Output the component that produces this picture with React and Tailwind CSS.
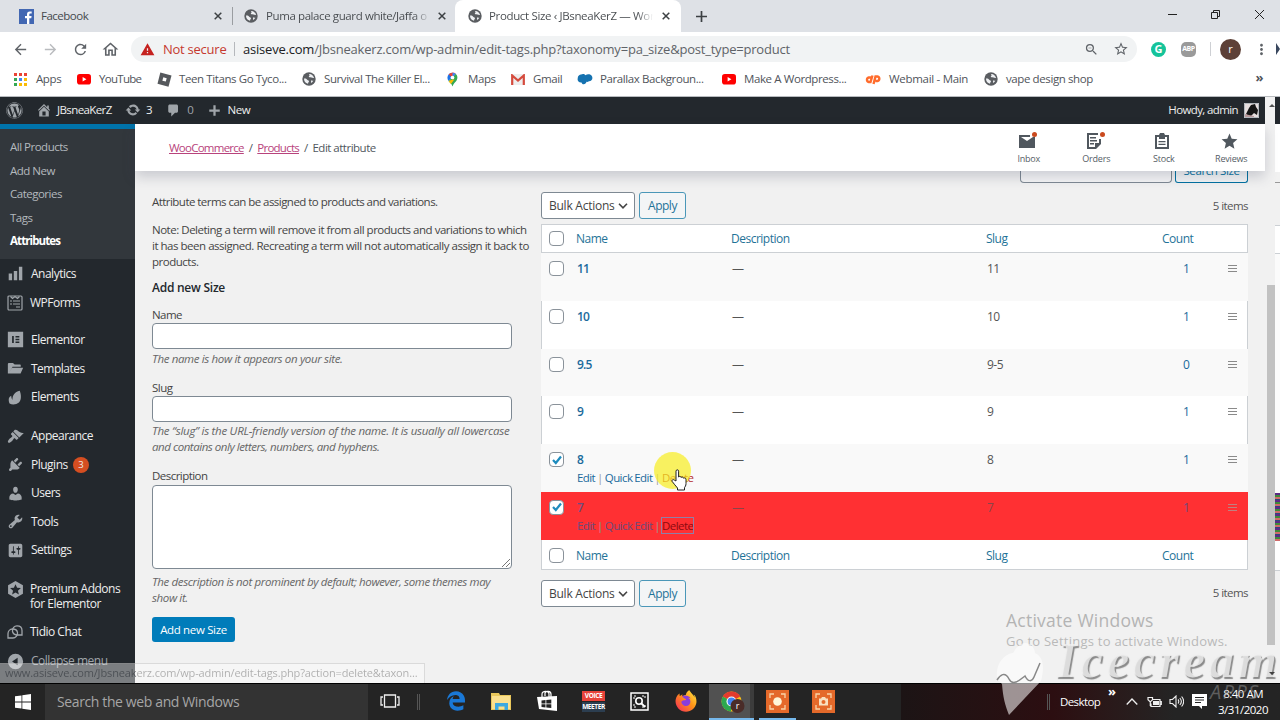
import { FaWordpress, FaEdgeLegacy, FaFirefoxBrowser } from "react-icons/fa";
import {
  MdArrowBack,
  MdArrowForward,
  MdRefresh,
  MdOutlineHome,
  MdWarning,
  MdStarBorder,
  MdZoomOut,
  MdMoreVert,
  MdStar,
} from "react-icons/md";

const dash = {
  home: "M16 8.5l1.53 1.53-1.06 1.06L10 4.6l-6.47 6.49-1.06-1.06L10 2.5l4 4v-2h2v4zm-6-2.46l6 5.99V18H4v-5.97zM12 17v-5H8v5h4z",
  update:
    "M10.2 3.28c3.53 0 6.43 2.61 6.92 6h2.08l-3.5 4-3.5-4h2.32c-.45-1.97-2.21-3.45-4.32-3.45-1.45 0-2.73.71-3.54 1.78L4.95 5.66C6.23 4.2 8.11 3.28 10.2 3.28zm-.4 13.44c-3.52 0-6.43-2.61-6.92-6H.8l3.5-4c1.17 1.33 2.33 2.67 3.5 4H5.48c.45 1.97 2.21 3.45 4.32 3.45 1.45 0 2.73-.71 3.54-1.78l1.71 1.95c-1.28 1.46-3.15 2.38-5.25 2.38z",
  comment:
    "M5 2h9c1.1 0 2 .9 2 2v7c0 1.1-.9 2-2 2h-2l-5 5v-5H5c-1.1 0-2-.9-2-2V4c0-1.1.9-2 2-2z",
  plus: "M17 8.5v3h-5.5V17h-3v-5.5H3v-3h5.500V3h3v5.500z",
  chart: "M18 18V2h-4v16h4zm-6 0V7H8v11h4zm-6 0v-8H2v8h4z",
  elementor: "M1 1h18v18H1zM6 6v8h2V6zm4 0v1.600h4.500V6zm0 3.200v1.600h4.500V9.200zm0 3.200V14h4.500v-1.600z",
  folder: "M1 16V5c0-1 .6-1.600 1.500-1.600H7l2 2h6c.8 0 1.200.5 1.200 1.200V8H6.500L3 14l2.700-4.800H19L16 16z",
  leaf: "M3 17c-2-5-.5-8 2-9 0 3 1 4 1.500 5C6 8 9 3 15 2c2 5 2 11-1 14-3 2.500-8 3-11 1z",
  brush:
    "M14.48 11.06L7.41 3.99l1.5-1.5c.5-.56 2.3-.47 3.51.32 1.21.8 1.43 1.28 2.91 2.1 1.18.64 2.45 1.26 4.45.85zm-.71.71L6.7 4.7 4.93 6.47c-.39.39-.39 1.02 0 1.41l1.06 1.06c.39.39.39 1.03 0 1.42-.6.6-1.43 1.11-2.21 1.69-.35.26-.7.53-1.01.84C1.43 14.23.4 16.08 1.4 17.07c.99 1 2.84-.03 4.18-1.36.31-.31.58-.66.85-1.02.57-.78 1.08-1.61 1.69-2.21.39-.39 1.02-.39 1.41 0l1.06 1.06c.39.39 1.02.39 1.41 0z",
  plug: "M13.11 4.36L9.87 7.6 8 5.73l3.24-3.24c.35-.34 1.05-.2 1.56.32.52.51.66 1.21.31 1.55zm-8 1.77l.91-1.12 9.01 9.01-1.19.84c-.71.71-2.63 1.16-3.82 1.16H6.14L4.9 17.26c-.59.59-1.54.59-2.12 0-.59-.58-.59-1.53 0-2.12l1.24-1.24v-3.88c0-1.13.4-3.19 1.09-3.89zm7.26 3.97l3.24-3.24c.34-.35 1.04-.21 1.55.31.52.51.66 1.21.31 1.55l-3.24 3.25z",
  user: "M10 9.25c-2.27 0-2.73-3.44-2.73-3.44C7 4.02 7.82 2 9.97 2c2.16 0 2.98 2.02 2.71 3.81 0 0-.41 3.44-2.68 3.44zm0 2.57L12.72 10c2.39 0 4.52 2.33 4.52 4.53v2.49s-3.65 1.13-7.24 1.13c-3.65 0-7.24-1.13-7.24-1.13v-2.49c0-2.25 1.94-4.48 4.47-4.48z",
  wrench:
    "M16.68 9.77c-1.34 1.34-3.3 1.67-4.95.99l-5.41 6.52c-.99.99-2.59.99-3.58 0s-.99-2.59 0-3.57l6.52-5.42c-.68-1.65-.35-3.61.99-4.95 1.28-1.28 3.12-1.62 4.72-1.06l-2.89 2.89 2.82 2.82 2.86-2.87c.53 1.58.18 3.39-1.08 4.65zM3.81 16.21c.4.39 1.04.39 1.43 0 .4-.4.4-1.04 0-1.43-.39-.4-1.03-.4-1.43 0-.39.39-.39 1.03 0 1.43z",
  settings:
    "M18 16V4c0-1.1-.9-2-2-2H4c-1.1 0-2 .9-2 2v12c0 1.1.9 2 2 2h12c1.1 0 2-.9 2-2zM8 11h1c.55 0 1 .45 1 1s-.45 1-1 1H8v1.5c0 .28-.22.5-.5.5s-.5-.22-.5-.5V13H6c-.55 0-1-.45-1-1s.45-1 1-1h1V5.5c0-.28.22-.5.5-.5s.5.22.5.5V11zm5-2h-1c-.55 0-1-.45-1-1s.45-1 1-1h1V5.5c0-.28.22-.5.5-.5s.5.22.5.5V7h1c.55 0 1 .45 1 1s-.45 1-1 1h-1v5.5c0 .28-.22.5-.5.5s-.5-.22-.5-.5V9z",
  collapse: "M10 1a9 9 0 1 0 0 18 9 9 0 0 0 0-18zm2.500 4.500v9L6 10z",
};

const Dash = ({ name, className = "size-[17px] text-[#a0a5aa]" }) => (
  <svg viewBox="0 0 20 20" fill="currentColor" fillRule="evenodd" className={`shrink-0 ${className}`}>
    <path d={dash[name]} />
  </svg>
);

const WpFormsIcon = () => (
  <svg viewBox="0 0 16 16" className="size-4 shrink-0" fill="none" stroke="#a0a5aa" strokeWidth="1.200">
    <rect x="1" y="1" width="14" height="14" rx="1" />
    <path d="M3.500 1.500l2 2 2.500-2 2.500 2 2-2M3 6h2M6 6h7M3 9h2M6 9h7M9 12h4" />
  </svg>
);

const PremiumIcon = () => (
  <svg viewBox="0 0 16 16" className="size-[17px] shrink-0">
    <path d="M8 0l7 4v8l-7 4-7-4V4z" fill="#a0a5aa" />
    <path d="M8 3l1.500 3.400 3.600.3-2.800 2.400.9 3.600L8 10.800l-3.200 1.900.9-3.600-2.800-2.400 3.600-.3z" fill="#23282d" />
  </svg>
);

const TidioIcon = () => (
  <svg viewBox="0 0 16 16" className="size-4 shrink-0" fill="none" stroke="#a0a5aa" strokeWidth="1.300">
    <path d="M5.500 7.500C5 4 7.500 1.800 10 1.800c3 0 5 2 5 4.700V11h-4.500C8 11 6 9.500 5.500 7.500z" />
    <path d="M10.500 8.500c.4 3-2 5.500-4.500 5.500H1V9.800C1 7 3 5 5.500 5c2.500 0 4.700 1.300 5 3.500z" />
  </svg>
);

const Globe = () => (
  <svg viewBox="0 0 14 14" className="size-[14px] shrink-0">
    <circle cx="7" cy="7" r="6.700" fill="#5a5d61" />
    <path d="M2 6.500c1.500-.3 2.500.3 3.200 1.200.8.800 1.800.6 1.800 1.600 0 .8-.8 1-1 2.500C3.500 11.300 1.800 9 2 6.500zM7.300 1.900c2.500 0 4.300 1.800 4.700 3.900-.8.600-1.500.2-2.300-.2-.8-.5-2-.2-2.700-.7-.6-.6.2-1.200.8-1.500-.6-.4-.9-.8-.5-1.500zM9 8.500c.8-.3 1.800 0 2.300.3-.5 1-1.200 1.800-2.200 2.300z" fill="#eef0f3" />
  </svg>
);

const YouTube = () => (
  <svg viewBox="0 0 14 12" className="h-3 w-[14px] shrink-0">
    <rect y="1" width="14" height="10.500" rx="2.800" fill="#f00" />
    <path d="M5.600 4l3.800 2.200-3.800 2.200z" fill="#fff" />
  </svg>
);

const appColors = ["#ea4335", "#ea4335", "#ea4335", "#34a853", "#4285f4", "#fbbc05", "#34a853", "#fbbc05", "#fbbc05"];
const AppsGrid = () => (
  <svg viewBox="0 0 13 13" className="size-[13px] shrink-0">
    {appColors.map((c, i) => (
      <rect key={i} x={(i % 3) * 5} y={Math.floor(i / 3) * 5} width="3" height="3" fill={c} />
    ))}
  </svg>
);

const Roblox = () => (
  <svg viewBox="0 0 15 15" className="size-[15px] shrink-0">
    <path d="M3.300.5l11.200 3-3 11.200-11-3z" fill="#55585c" />
    <path d="M6.300 5.300l3.400.9-.9 3.400-3.400-.9z" fill="#fff" />
  </svg>
);

const MapPin = () => (
  <svg viewBox="0 0 12 16" className="h-[15px] w-[11px] shrink-0">
    <path d="M6 .5A5.500 5.500 0 0 0 .5 6c0 1.500.5 2.500 1.200 3.500L6 5z" fill="#1a73e8" />
    <path d="M1.800 2.500L6 6 9.500 1.700A5.500 5.500 0 0 0 1.800 2.500z" fill="#ea4335" />
    <path d="M9.500 1.700L1.700 9.700C3 11.500 5 12.500 6 15.500c.8-3 2.800-4 4.300-6.200C12 6.500 11.700 3.700 9.500 1.700z" fill="#34a853" />
    <path d="M6 8L1.700 9.700c.8 1.200 1.800 2 2.600 3.200L8 8z" fill="#fbbc04" />
    <path d="M6 .5c1.300 0 2.600.4 3.500 1.200L6 6z" fill="#4285f4" />
    <circle cx="6" cy="5.800" r="2" fill="#fff" />
  </svg>
);

const GmailIcon = () => (
  <svg viewBox="0 0 14 11" className="h-[11px] w-[14px] shrink-0">
    <rect width="14" height="11" rx="1" fill="#eee" />
    <path d="M1.200 11V1.500L7 6.500l5.800-5V11" fill="none" stroke="#d54b3d" strokeWidth="2.200" />
  </svg>
);

const CloudIcon = () => (
  <svg viewBox="0 0 16 12" className="h-3 w-4 shrink-0" fill="#1572b0">
    <path d="M4 1.500C6 .5 7.500 1 8.500 2.300 10 .8 13 .8 14.500 2.500 16.500 5 15 8 12 8.200 11 9 10 9 9.500 8.800 9 11.500 5.500 12.500 4.500 9.500 1.500 9.800 0 7.500.8 5 .5 3.500 2.500 1.500 4 1.500z" />
  </svg>
);

const CpanelIcon = () => (
  <svg viewBox="0 0 16 12" className="h-3 w-4 shrink-0" fill="none" stroke="#ff6c2c" strokeWidth="2.400">
    <path d="M6 4.500H3.800a2.300 2.300 0 0 0 0 4.500H5.500L7.500 2.500M8.500 11l2-7.500h2a2.300 2.300 0 0 1 0 4.500H10.500" />
  </svg>
);

const bookmarks = [
  { label: "Apps", icon: <AppsGrid />, cls: "ml-[14px] w-[63px] gap-[9px]" },
  { label: "YouTube", icon: <YouTube />, cls: "w-[80px] gap-2 tracking-[-0.7px]" },
  { label: "Teen Titans Go Tyco...", icon: <Roblox />, cls: "w-[145px] gap-[7px]" },
  { label: "Survival The Killer El...", icon: <Globe />, cls: "w-[145px] gap-2" },
  { label: "Maps", icon: <MapPin />, cls: "w-[64px] gap-[10px]" },
  { label: "Gmail", icon: <GmailIcon />, cls: "w-[66px] gap-2" },
  { label: "Parallax Backgroun...", icon: <CloudIcon />, cls: "w-[145px] gap-[7px]" },
  { label: "Make A Wordpress...", icon: <YouTube />, cls: "w-[143px] gap-2" },
  { label: "Webmail - Main", icon: <CpanelIcon />, cls: "w-[119px] gap-[8px] tracking-[-0.3px]" },
  { label: "vape design shop", icon: <Globe />, cls: "gap-2" },
];

const Close = ({ className = "" }) => (
  <svg viewBox="0 0 8 8" className={`size-2 shrink-0 ${className}`} stroke="#3c4043" strokeWidth="1.500">
    <path d="M.7.7l6.600 6.600M7.300.7L.7 7.300" />
  </svg>
);

function TabStrip() {
  return (
    <div className="flex h-8 items-center bg-[#dee1e6] text-[11.500px] tracking-[-0.35px] text-[#45494d]">
      <div className="flex w-[232px] items-center pl-[19px]">
        <svg viewBox="0 0 15 15" className="size-[15px] shrink-0">
          <rect width="15" height="15" fill="#4267b2" />
          <path d="M10.300 15V9.300h2l.3-2.200h-2.300V5.700c0-.7.3-1.100 1.100-1.100h1.300V2.500h-1.800C8.800 2.500 8 3.700 8 5.400v1.700H6v2.200h2V15z" fill="#fff" />
        </svg>
        <span className="ml-[7px] flex-1 tracking-[-0.5px]">Facebook</span>
        <Close className="mr-[10px]" />
      </div>
      <div className="flex h-[18px] w-[223px] items-center border-l border-[#9a9da1] pl-[11px]">
        <Globe />
        <span className="ml-2 w-[164px] overflow-hidden bg-linear-to-r from-[#45494d] from-90% to-[#dee1e6] bg-clip-text tracking-[-0.4px] whitespace-nowrap text-transparent">
          Puma palace guard white/Jaffa o
        </span>
        <Close className="ml-[8px]" />
      </div>
      <div className="flex h-full w-[226px] items-center rounded-t-lg bg-white pl-[13px]">
        <Globe />
        <span className="ml-[7px] w-[164px] overflow-hidden bg-linear-to-r from-[#45494d] from-90% to-white bg-clip-text whitespace-nowrap text-transparent">
          Product Size ‹ JBsneaKerZ — Wor
        </span>
        <Close className="ml-[9px]" />
      </div>
      <svg viewBox="0 0 11 11" className="ml-[15px] size-[11px]" stroke="#3c4043" strokeWidth="1.700">
        <path d="M5.500 0v11M0 5.500h11" />
      </svg>
      <svg viewBox="0 0 110 12" className="mr-[6px] mb-[5px] ml-auto h-3 w-[110px]" fill="none" stroke="#222" strokeWidth="1">
        <path d="M4 6.500h9M47.500 4.500h6v6h-6zM49.500 4V2.500h6v6H54M91 2l9 9M100 2l-9 9" />
      </svg>
    </div>
  );
}

function Toolbar() {
  return (
    <div className="flex h-[34px] items-center bg-white text-[#5f6368]">
      <MdArrowBack className="ml-3 size-[17px]" />
      <MdArrowForward className="ml-[13px] size-[17px] text-[#b9bbbe]" />
      <MdRefresh className="ml-[13px] size-[17px]" />
      <MdOutlineHome className="ml-[12px] size-[19px]" />
      <div className="ml-[11px] flex h-[26px] w-[1006px] items-center rounded-full bg-[#f1f3f4] pr-[8px] pl-[9px] text-[13px] whitespace-nowrap">
        <MdWarning className="size-[15px] text-[#c5221f]" />
        <span className="ml-[8px] w-[63px] pt-px tracking-[-0.25px] text-[#c5392f]">Not secure</span>
        <span className="mx-2 h-[14px] w-px bg-[#b5b8bc]" />
        <span className="pt-px tracking-[-0.21px]">
          <span className="text-[#202124]">asiseve.com</span>/Jbsneakerz.com/wp-admin/edit-tags.php?taxonomy=pa_size&amp;post_type=product
        </span>
        <MdZoomOut className="ml-auto size-[15px]" />
        <MdStarBorder className="ml-[14px] size-[16px]" />
      </div>
      <span className="ml-[14px] flex size-[15px] items-center justify-center rounded-full bg-[#15c39a] text-[11px] font-bold text-white">G</span>
      <span className="ml-[15px] flex size-[15px] items-center justify-center rounded-[5px] bg-[#9a9a9a] text-[7px] font-bold tracking-[-0.4px] text-white">ABP</span>
      <span className="ml-[14px] h-[14px] w-px bg-[#ced0d4]" />
      <span className="ml-[9px] flex size-[21px] items-center justify-center rounded-full bg-[#5d4037] text-[11px] text-white">r</span>
      <MdMoreVert className="ml-3 size-[17px]" />
      <span className="ml-auto h-3 w-1 bg-[#39475e] [clip-path:polygon(0_0,100%_50%,0_100%)]" />
    </div>
  );
}

function Bookmarks() {
  return (
    <div className="flex h-[31px] items-center border-b border-[#b8bbbf] bg-white pb-1 text-[11.500px] tracking-[-0.4px] whitespace-nowrap text-[#50545a]">
      {bookmarks.map((b) => (
        <div key={b.label} className={`flex shrink-0 items-center ${b.cls}`}>
          {b.icon}
          <span>{b.label}</span>
        </div>
      ))}
      <span className="mr-[17px] ml-auto pb-0.5 text-[13px] font-bold">»</span>
    </div>
  );
}

function AdminBar() {
  return (
    <div className="flex h-[27px] items-center bg-[#23282d] pb-px text-[11.500px] font-medium tracking-[-0.4px] text-[#eee]">
      <FaWordpress className="ml-[6px] size-[17px] text-[#a0a5aa]" />
      <Dash name="home" className="ml-[13px] size-4 text-[#a0a5aa]" />
      <span className="ml-[5px] w-[55px] tracking-[-0.6px]">JBsneaKerZ</span>
      <Dash name="update" className="ml-[13px] size-4 text-[#a0a5aa]" />
      <span className="ml-[5px]">3</span>
      <Dash name="comment" className="ml-[14px] size-[15px] text-[#a0a5aa]" />
      <span className="ml-[6px] text-[#a0a5aa]">0</span>
      <Dash name="plus" className="ml-[14px] size-[15px] text-[#a0a5aa]" />
      <span className="ml-[5px]">New</span>
      <span className="ml-auto tracking-[-0.62px]">Howdy, admin</span>
      <svg viewBox="0 0 15 15" className="mr-[6px] ml-[6px] size-[15px]">
        <rect width="15" height="15" fill="#e6dede" />
        <path d="M2 11l3-6 2-3 4-1 1 3 2 3-1 5-3-2-4 4z" fill="#151515" />
        <path d="M1 11l4 1 5 1v1H1z" fill="#b89a9c" />
        <path d="M.5.5h14v14H.5z" fill="none" stroke="#b4b9be" />
      </svg>
    </div>
  );
}

const subItems = ["All Products", "Add New", "Categories", "Tags"];

const MenuItem = ({ icon, label, h = "h-[29px]", children }) => (
  <div className={`flex items-center gap-[7px] pl-[7px] ${h}`}>
    {icon}
    <span>{label}</span>
    {children}
  </div>
);

function Sidebar() {
  return (
    <aside className="h-[559px] w-[135px] shrink-0 overflow-hidden bg-[#23282d] text-[12px] font-medium tracking-[-0.5px] text-[#eee]">
      <div className="h-[5px] bg-[#0073aa]" />
      <div className="flex h-[130px] flex-col bg-[#32373c] pt-[6px] pl-[10px] text-[11.500px] font-normal text-[#b4b9be]">
        {subItems.map((s) => (
          <span key={s} className="h-[23.500px] leading-[23.500px]">{s}</span>
        ))}
        <span className="h-[23.500px] leading-[23.500px] font-bold tracking-[-0.9px] text-white">Attributes</span>
      </div>
      <MenuItem icon={<Dash name="chart" />} label="Analytics" />
      <MenuItem icon={<WpFormsIcon />} label="WPForms" />
      <div className="h-2" />
      <MenuItem icon={<Dash name="elementor" />} label="Elementor" />
      <MenuItem icon={<Dash name="folder" />} label="Templates" />
      <MenuItem icon={<Dash name="leaf" />} label="Elements" h="h-[28px]" />
      <div className="h-[11px]" />
      <MenuItem icon={<Dash name="brush" />} label="Appearance" h="h-[28.500px]" />
      <MenuItem icon={<Dash name="plug" />} label="Plugins" h="h-[28.500px]">
        <span className="-ml-[2px] flex size-4 items-center justify-center rounded-full bg-[#d54e21] text-[9.500px]">3</span>
      </MenuItem>
      <MenuItem icon={<Dash name="user" />} label="Users" h="h-[28.500px]" />
      <MenuItem icon={<Dash name="wrench" />} label="Tools" h="h-[28.500px]" />
      <MenuItem icon={<Dash name="settings" />} label="Settings" h="h-[28.500px]" />
      <div className="mt-[16px] flex h-[37px] gap-[6px] pl-[7px] leading-[15px]">
        <PremiumIcon />
        <span>Premium Addons<br />for Elementor</span>
      </div>
      <MenuItem icon={<TidioIcon />} label="Tidio Chat" />
      <div className="text-[#a0a5aa]">
        <MenuItem icon={<Dash name="collapse" />} label="Collapse menu" />
      </div>
    </aside>
  );
}

const Activity = ({ label, dot, children }) => (
  <div className="relative flex w-[67.500px] flex-col items-center gap-[3px] pt-px text-[9px] leading-[11px] tracking-[-0.2px] text-[#555d66]">
    <svg viewBox="0 0 18 18" className="mr-[4px] size-[18px]" fill="#50575e">{children}</svg>
    {dot && <span className="absolute top-px left-[37px] size-[5px] rounded-full bg-[#ca4a1f]" />}
    <span>{label}</span>
  </div>
);

function WooHeader() {
  return (
    <header className="relative z-10 flex h-[47px] shrink-0 items-center bg-white text-[11.500px] tracking-[-0.75px] text-[#50575e] shadow-[0_6px_12px_rgba(60,65,90,0.22)]">
      <div className="ml-[34px] flex flex-1 gap-[5px]">
        <a className="text-[#b8437c] underline">WooCommerce</a>
        <span>/</span>
        <a className="text-[#b8437c] underline">Products</a>
        <span>/</span>
        <span className="tracking-[-0.5px]">Edit attribute</span>
      </div>
      <div className="flex">
        <Activity label="Inbox" dot>
          <path d="M1 3h11v2H3l6 4 6-4h2v11H1z" />
        </Activity>
        <Activity label="Orders" dot>
          <path fillRule="evenodd" d="M2 1h11v2H4v12h6v-4h4V7h2v5l-5 5H2zM5 5h6v1.500H5zm0 3h7v1.500H5zm0 3h4v1.500H5z" />
        </Activity>
        <Activity label="Stock">
          <path fillRule="evenodd" d="M2 3h4l1-2h4l1 2h4v14H2zm2 2v10h10V5h-2v2H6V5zm1.500 4h7v1.300h-7zm0 2.800h7v1.300h-7z" />
        </Activity>
        <div className="flex w-[67.500px] flex-col items-center gap-[2px] pt-px text-[9px] leading-[11px] tracking-[-0.2px] text-[#555d66]">
          <MdStar className="mr-[4px] size-[19px] text-[#50575e]" />
          <span>Reviews</span>
        </div>
      </div>
    </header>
  );
}

const help = "text-[11.500px] italic text-[#666]";
const field = "h-[26px] w-[360px] rounded-[4px] border border-[#7e8993] bg-white";

function AddForm() {
  return (
    <div className="flex w-[406px] shrink-0 flex-col items-start pt-[23px] pl-[17px] text-[11.500px] leading-4 tracking-[-0.54px] whitespace-nowrap text-[#444]">
      <p>Attribute terms can be assigned to products and variations.</p>
      <p className="mt-[11.500px] tracking-[-0.48px]">
        Note: Deleting a term will remove it from all products and variations to which
        <br />
        it has been assigned. Recreating a term will not automatically assign it back to
        <br />
        products.
      </p>
      <h2 className="mt-[10px] text-[12px] font-semibold tracking-[-0.25px] text-[#23282d]">Add new Size</h2>
      <label className="mt-[11.500px]">Name</label>
      <div className={field} />
      <p className={`mt-0.5 tracking-[-0.35px] ${help}`}>The name is how it appears on your site.</p>
      <label className="mt-[13px]">Slug</label>
      <div className={field} />
      <p className={`mt-px mb-px tracking-[-0.27px] ${help}`}>
        The “slug” is the URL-friendly version of the name. It is usually all lowercase
        <br />
        <span className="tracking-[-0.46px]">and contains only letters, numbers, and hyphens.</span>
      </p>
      <label className="mt-3">Description</label>
      <div className="mt-px flex h-[84px] w-[360px] items-end justify-end rounded-[4px] border border-[#7e8993] bg-white p-px">
        <svg viewBox="0 0 8 8" className="size-2" stroke="#777"><path d="M0 8l8-8M4 8l4-4" /></svg>
      </div>
      <p className={`mt-[5px] tracking-[-0.38px] ${help}`}>
        The description is not prominent by default; however, some themes may
        <br />
        show it.
      </p>
      <button className="mt-[11px] h-[25px] w-[83px] rounded-[3px] bg-[#007cba] text-[11.500px] tracking-[-0.35px] text-white">
        Add new Size
      </button>
    </div>
  );
}

const Check = ({ on, className = "" }) => (
  <span className={`flex size-[15px] items-center justify-center rounded-[4px] border border-[#8a929a] bg-white ${className}`}>
    {on && (
      <svg viewBox="0 0 12 12" className="size-3" fill="none" stroke="#1e8cbe" strokeWidth="2.200">
        <path d="M2 6l2.800 3L10 2.500" />
      </svg>
    )}
  </span>
);

const BulkActions = () => (
  <div className="flex gap-[5px] text-[12px] tracking-[-0.25px]">
    <div className="flex h-[27px] w-[94px] items-center justify-between rounded-[3px] border border-[#7e8993] bg-white pt-px pr-[6px] pl-[7px] text-[#444]">
      Bulk Actions
      <svg viewBox="0 0 10 6" className="h-[6px] w-[10px]" fill="none" stroke="#444" strokeWidth="1.600"><path d="M1 .8l4 4 4-4" /></svg>
    </div>
    <button className="-ml-px h-[27px] w-[47px] rounded-[3px] border border-[#4a97b8] bg-[#f3f5f6] pt-px tracking-[-0.5px] text-[#1f7398]">Apply</button>
  </div>
);

const grid = "grid grid-cols-[35px_154px_256px_165px_60px_1fr]";

const HeadRow = ({ className }) => (
  <div className={`${grid} items-center border-x border-[#ccd0d4] bg-white text-[12px] tracking-[-0.5px] text-[#1f7398] ${className}`}>
    <Check className="ml-[7px]" />
    <span className="-ml-px">Name</span>
    <span>Description</span>
    <span className="-ml-px">Slug</span>
    <span className="pl-[10px]">Count</span>
  </div>
);

const terms = [
  { name: "11", slug: "11", count: 1 },
  { name: "10", slug: "10", count: 1 },
  { name: "9.5", slug: "9-5", count: 0 },
  { name: "9", slug: "9", count: 1 },
  { name: "8", slug: "8", count: 1, on: true },
  { name: "7", slug: "7", count: 1, on: true, removing: true },
];

function TermRow({ term, i }) {
  const { name, slug, count, on, removing } = term;
  const bg = removing
    ? "bg-[#ff3033] border-[#ff3033]"
    : i % 2
      ? "bg-white border-[#ccd0d4]"
      : "bg-[#f9f9f9] border-[#f9f9f9]";
  const link = removing ? "text-[#6d4b7c]" : "text-[#1b6a9c]";
  const plain = removing ? "text-[#8a4449]" : "text-[#555]";
  return (
    <div className={`${grid} h-[47.800px] border-x pt-[8px] text-[12px] leading-[15px] tracking-[-0.5px] ${bg} ${plain}`}>
      <Check on={on} className="ml-[7px]" />
      <div className="whitespace-nowrap">
        <div className={`font-semibold tracking-[-0.8px] ${link}`}>{name}</div>
        {on && (
          <div className="mt-[3px] text-[11.500px] tracking-[-0.57px] text-[#999] [word-spacing:-0.5px]">
            <span className={link}>Edit</span> | <span className={link}>Quick Edit</span> |{" "}
            <span className={removing ? "text-[#8d0a10] outline outline-[#8f7fa8]" : "text-[#b52b2b]"}>Delete</span>
          </div>
        )}
      </div>
      <span className="pl-px">—</span>
      <span>{slug}</span>
      <span className={`pl-[31px] ${link}`}>{count}</span>
      <svg viewBox="0 0 9 7" className="mt-1 ml-[16px] h-[7px] w-[9px]" stroke={removing ? "#c08080" : "#8a8a8a"}>
        <path d="M0 .5h9M0 3.500h9M0 6.500h9" />
      </svg>
    </div>
  );
}

function TermsTable() {
  return (
    <div className="w-[707px] shrink-0">
      <div className="flex h-[53px] items-start justify-end gap-[3px]">
        <div className="h-[12px] w-[152px] rounded-b-[4px] border border-t-0 border-[#7e8993] bg-[#f6f6f7]" />
        <div className="flex h-[12px] w-[73px] items-end justify-center overflow-hidden rounded-b-[3px] border border-t-0 border-[#0071a1] bg-[#f3f5f6] pb-[4px] text-[11.500px] leading-[14px] tracking-[-0.4px] text-[#0071a1]">
          Search Size
        </div>
      </div>
      <div className="-mt-[32px] flex h-[32px] justify-between">
        <BulkActions />
        <span className="pt-[5px] text-[11.500px] tracking-[-0.55px] text-[#555]">5 items</span>
      </div>
      <HeadRow className="h-[29px] border-y" />
      {terms.map((t, i) => (
        <TermRow key={t.name} term={t} i={i} />
      ))}
      <HeadRow className="h-[30px] border-b pt-[3px]" />
      <div className="mt-[10px] flex justify-between">
        <BulkActions />
        <span className="pt-[4px] text-[11.500px] tracking-[-0.55px] text-[#555]">5 items</span>
      </div>
    </div>
  );
}

// Neighbouring window that peeks out past the right edge of the browser
const Sliver = () => (
  <div className="flex w-[5px] shrink-0 flex-col bg-[#f1f1f1]">
    <div className="h-[27px] bg-[#23282d]" />
    <div className="h-[48px] bg-white" />
    <div className="h-[11px] border-b border-[#999]" />
    <div className="h-[42px]" />
    <div className="h-[29px] border-y border-[#ccd0d4] bg-white" />
    <div className="h-[239px] bg-[#fbfbfb]" />
    <div className="h-[48px] bg-[repeating-linear-gradient(#5b2a86_0_2px,#3f8a3a_2px_4px,#d06a6a_4px_6px,#2c4a7c_6px_7px)]" />
    <div className="h-[30px] border-b border-[#ccd0d4] bg-white" />
  </div>
);

const TaskIcon = ({ children, className = "w-[46px]" }) => (
  <div className={`flex h-full items-center justify-center pb-0.5 ${className}`}>{children}</div>
);

function Taskbar() {
  return (
    <div className="flex h-[37px] items-center border-t border-black bg-[#242424] text-white">
      <div className="flex w-[45px] justify-center">
        <svg viewBox="0 0 16 16" className="size-4" fill="#fff">
          <path d="M0 2.300l6.500-.9v6.200H0zM7.300 1.300L16 0v7.600H7.300zM0 8.400h6.500v6.200L0 13.700zM7.300 8.400H16V16l-8.700-1.300z" />
        </svg>
      </div>
      <div className="flex h-full w-[323px] items-center bg-[#333] pb-px pl-[12px] text-[14px] tracking-[-0.38px] text-[#a6a6a6]">
        Search the web and Windows
      </div>
      <TaskIcon className="w-[44px]">
        <svg viewBox="0 0 20 14" className="h-[14px] w-5" fill="none" stroke="#eee" strokeWidth="1.300">
          <path d="M4.500 1h11v12h-11zM3 3H1v8h2M17 3h2v8h-2" />
        </svg>
      </TaskIcon>
      <span className="ml-[5px] h-4 w-[3px] border-x border-[#555]" />
      <TaskIcon className="ml-[10px] w-[52px]"><FaEdgeLegacy className="size-5 text-[#1a78d6]" /></TaskIcon>
      <TaskIcon className="w-[38px]">
        <svg viewBox="0 0 20 18" className="h-[18px] w-5">
          <path d="M0 1h8l1 2h11v15H0z" fill="#e9c75b" />
          <path d="M1 4h18v13H1z" fill="#fbe08f" />
          <path d="M4 18v-7h13v7h-3.500v-3.500h-6V18z" fill="#3da9e0" />
        </svg>
      </TaskIcon>
      <TaskIcon className="w-[54px]">
        <svg viewBox="0 0 20 22" className="h-[22px] w-5">
          <path d="M5 7V4c0-3.500 7-3.500 7 0v3M8 6V3c1-2.500 6-2 6 1v3" fill="none" stroke="#fff" strokeWidth="1.200" />
          <path d="M0 7l20-1v15L2 19z" fill="#fff" />
          <path d="M4.500 10.500l4-.4v3.400h-4zM9.300 10l5-.5v4h-5zM4.500 14.200h4v3.200l-4-.4zM9.300 14.200h5v3.800l-5-.5z" fill="#242424" />
        </svg>
      </TaskIcon>
      <TaskIcon className="w-[39px]">
        <div className="w-[23px] text-center text-[6.500px] leading-[10px] font-bold tracking-[-0.4px]">
          <div className="bg-[#e8433a]">VOICE</div>
          <div className="mt-px bg-[#2c3e50]">MEETER</div>
        </div>
      </TaskIcon>
      <TaskIcon className="w-[53px]">
        <svg viewBox="0 0 19 19" className="size-[19px]" fill="none" stroke="#fff">
          <path d="M1 1h17v17H1z" strokeWidth="1.500" />
          <path d="M4 7V4h3M12 4h3v3M4 12v3h3M12 15h3v-3" strokeDasharray="2 1" />
          <circle cx="9" cy="9" r="3.200" strokeWidth="1.600" />
          <path d="M11.500 11.500l3.500 3.500" strokeWidth="1.800" />
        </svg>
      </TaskIcon>
      <TaskIcon className="w-[40px]">
        <svg viewBox="0 0 22 22" className="size-[22px]">
          <defs>
            <linearGradient id="fox" x1="1" y1="0" x2="0" y2="1">
              <stop offset="0" stopColor="#fff04a" />
              <stop offset="0.450" stopColor="#ff9417" />
              <stop offset="1" stopColor="#f5245f" />
            </linearGradient>
          </defs>
          <circle cx="11" cy="12" r="7" fill="#8a3ddb" />
          <FaFirefoxBrowser size={22} fill="url(#fox)" />
        </svg>
      </TaskIcon>
      <div className="ml-[3px] flex h-full w-[41px] items-center justify-center border-b-2 border-[#76b9ed] bg-[#515151] pl-[6px]">
        <svg viewBox="0 0 24 22" className="mt-[2px] h-[22px] w-6">
          <circle cx="10.500" cy="10.500" r="10" fill="#fbc116" />
          <path d="M10.500 10.500L1.800 5.500a10 10 0 0 1 17.400 0z" fill="#e33b2e" />
          <path d="M10.500 10.500L1.800 5.500a10 10 0 0 0 8.200 15z" fill="#2da94f" />
          <circle cx="10.500" cy="10.500" r="5" fill="#fff" />
          <circle cx="10.500" cy="10.500" r="3.900" fill="#4285f4" />
          <circle cx="16.500" cy="15" r="7" fill="#4a2c28" />
          <text x="16.500" y="18" fontSize="9" fill="#fff" textAnchor="middle">r</text>
        </svg>
      </div>
      <div className="h-full w-[4px] border-b-2 border-[#76b9ed] bg-[#3c3c3c]" />
      <div className="ml-[5px] flex h-full w-[37px] items-center justify-center border-b-2 border-[#76b9ed]">
        <svg viewBox="0 0 23 23" className="size-[23px]">
          <rect width="23" height="23" fill="#e4692a" />
          <path d="M4 8V4h4M15 4h4v4M4 15v4h4M15 19h4v-4" fill="none" stroke="#f8d3a8" strokeWidth="1.300" />
          <circle cx="11.500" cy="11.500" r="4.300" fill="#fff6d8" />
        </svg>
      </div>
      <TaskIcon className="w-[55px]">
        <svg viewBox="0 0 23 23" className="size-[23px]">
          <rect width="23" height="23" fill="#e4692a" />
          <path d="M4 8V4h4M15 4h4v4M4 15v4h4M15 19h4v-4" fill="none" stroke="#f8d3a8" strokeWidth="1.300" />
          <path d="M7 8.500h2l1-1.500h3l1 1.500h2v7H7z" fill="#f8e0c0" />
          <circle cx="11.500" cy="12" r="2" fill="#e4692a" />
        </svg>
      </TaskIcon>
      <div className="ml-[50px] flex h-full flex-1 items-center bg-linear-to-r from-[#1c1415] via-[#2c0e11] via-40% to-[#242424] to-72% pb-px text-[11.500px] tracking-[-0.6px]">
        <span className="ml-[146px] h-4 w-[3px] border-x border-[#555]" />
        <span className="ml-[10px] w-[41px]">Desktop</span>
        <span className="mb-[20px] ml-[7px] text-[13px] font-bold">»</span>
        <svg viewBox="0 0 12 7" className="ml-[11px] h-[7px] w-3" fill="none" stroke="#eee" strokeWidth="1.300"><path d="M.7 6.500L6 1l5.300 5.500" /></svg>
        <svg viewBox="0 0 15 12" className="ml-[9px] h-3 w-[15px]" fill="none" stroke="#eee" strokeWidth="1.200">
          <path d="M5.500 3.500H13v7H4v-3M13 5.500h1.300v3H13M1 1.500h4.500v2.300L3.300 6 1 3.800zM3.300 6v4" />
          <path d="M6 5h6v4H6z" fill="#eee" stroke="none" />
        </svg>
        <svg viewBox="0 0 15 13" className="ml-[7px] h-[13px] w-[15px]" fill="none" stroke="#eee" strokeWidth="1.100">
          <path d="M1 4.500h2.500L7 1v11L3.500 8.500H1zM9 4.500c1 1 1 3 0 4M10.800 3c1.800 2 1.800 5 0 7M12.600 1.500c2.500 3 2.500 7 0 10" />
        </svg>
        <svg viewBox="0 0 15 15" className="ml-[8px] size-[15px]">
          <path d="M0 0h15v12h-5v3l-3-3H0z" fill="#fff" />
          <path d="M3 3.500h9M3 6h9M3 8.500h6" stroke="#242424" />
        </svg>
        <div className="mr-[12px] ml-auto text-right text-[11.500px] leading-4 tracking-[-0.5px]">
          <div className="pr-[5px]">8:40 AM</div>
          <div>3/31/2020</div>
        </div>
      </div>
    </div>
  );
}

function Watermark() {
  return (
    <div className="absolute top-[608px] left-[995px] h-[112px] w-[285px] overflow-hidden whitespace-nowrap">
      <div className="pt-[1px] pl-[11px] text-[17.500px] leading-[22px] tracking-[0.25px] text-[#b4b4b4]">Activate Windows</div>
      <div className="pl-[11px] text-[13px] leading-[21px] tracking-[0.25px] text-[#b9b9b9]">Go to Settings to activate Windows.</div>
      <svg viewBox="0 0 52 80" className="absolute top-[31px] left-0 h-[80px] w-[52px]">
        <path d="M2 40C0 20 14 14 18 14 28-4 40 6 40 14c8 3 10 14 6 28L14 76C10 66 8 58 7 45z" fill="#fff" fillOpacity="0.550" />
        <path d="M2 41c3-5 8-9 12-1s12 0 16-3c3 6 7 6 9 1l6-14" fill="none" stroke="#888" strokeWidth="1.500" />
      </svg>
      <div className="absolute top-[24px] left-[62px] font-['Liberation_Serif',serif] text-[50px] leading-[56px] font-bold tracking-[4px] text-[#f0f0f0]/80 italic [text-shadow:1.500px_1.500px_1px_#8a8a8a]">
        Icecream
      </div>
      <div className="absolute top-[72px] left-[215px] text-[20px] leading-[24px] tracking-[1.500px] text-[#999]/50 italic">APPS</div>
      <div className="absolute top-[64px] left-[274px] h-0 w-0 border-x-[3px] border-t-[3px] border-x-transparent border-t-[#404040]" />
    </div>
  );
}

export default function App() {
  return (
    <div className="relative h-[720px] w-[1280px] overflow-hidden bg-white font-['Open_Sans','Noto_Sans',sans-serif]">
      <TabStrip />
      <Toolbar />
      <Bookmarks />
      <div className="flex h-[586px] overflow-hidden">
        <div className="w-[1265px] shrink-0">
          <AdminBar />
          <div className="flex">
            <Sidebar />
            <main className="h-[559px] flex-1 bg-[#f1f1f1]">
              <WooHeader />
              <div className="flex">
                <AddForm />
                <TermsTable />
              </div>
            </main>
          </div>
        </div>
        <div className="w-[10px] shrink-0 bg-[#f1f1f1] pt-[7px]">
          <div className="ml-[4px] h-0 w-0 border-x-[3px] border-b-[3px] border-x-transparent border-b-[#505050]" />
          <div className="mt-[178px] ml-[2px] h-[360px] bg-[#c1c1c1]" />
        </div>
        <Sliver />
      </div>
      <Taskbar />

      <div className="absolute top-[663px] left-0 h-5 w-[425px] border-t border-r border-[#999]/30 bg-white/40 pl-[5px] text-[11px] leading-[18px] tracking-[-0.13px] whitespace-nowrap">
        <span className="bg-linear-to-r from-[#4b4f54] from-[130px] to-[#adadad] to-[131px] bg-clip-text text-transparent">
          www.asiseve.com/Jbsneakerz.com/wp-admin/edit-tags.php?action=delete&amp;taxon...
        </span>
      </div>
      <div className="absolute top-[452px] left-[654px] size-[37px] rounded-full bg-[#f8ee20]/70" />
      <svg viewBox="0 0 17 22" className="absolute top-[469px] left-[671px] h-[22px] w-[17px]">
        <path
          d="M5 12V2.200C5 .3 7.600.3 7.600 2.200V8c.5-1 2.300-.8 2.500.5.700-.8 2.200-.5 2.400.7.900-.7 2.500-.2 2.500 1.500v4c0 2-1 3-1.500 4V21H6.500v-2C5 17 2.500 14.500 1.200 12.500.5 11 2 10 3.200 11z"
          fill="#fff"
          stroke="#222"
        />
      </svg>
      <Watermark />
    </div>
  );
}
